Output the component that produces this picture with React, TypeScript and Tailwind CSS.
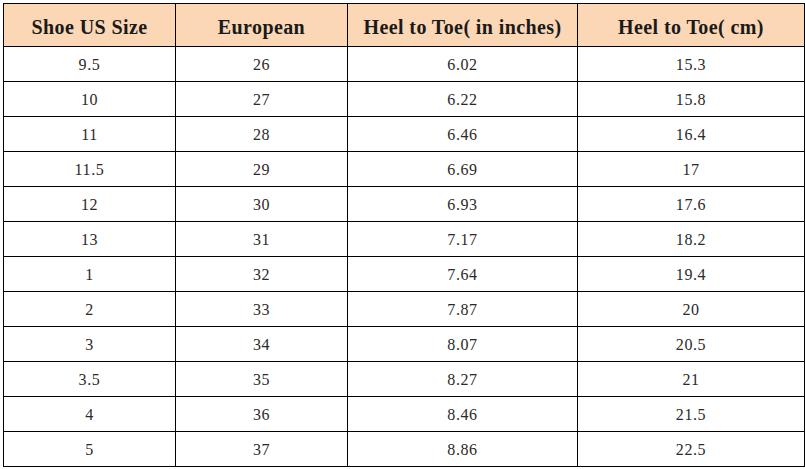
const rows = [
  ["9.5", "26", "6.02", "15.3"],
  ["10", "27", "6.22", "15.8"],
  ["11", "28", "6.46", "16.4"],
  ["11.5", "29", "6.69", "17"],
  ["12", "30", "6.93", "17.6"],
  ["13", "31", "7.17", "18.2"],
  ["1", "32", "7.64", "19.4"],
  ["2", "33", "7.87", "20"],
  ["3", "34", "8.07", "20.5"],
  ["3.5", "35", "8.27", "21"],
  ["4", "36", "8.46", "21.5"],
  ["5", "37", "8.86", "22.5"],
];

const headers = ["Shoe US Size", "European", "Heel to Toe( in inches)", "Heel to Toe( cm)"];
const widths = ["w-[172px]", "w-[172px]", "w-[230px]", "w-[227px]"];

export default function App() {
  return (
    <div className="w-[805px] h-[469px] bg-white pt-[3px] pl-[3px] overflow-hidden font-['Liberation_Serif',serif] text-[#2a2a2a]">
      <table className="border-collapse table-fixed w-[801px]">
        <colgroup>
          {widths.map((w, i) => (
            <col key={i} className={w} />
          ))}
        </colgroup>
        <thead>
          <tr className="h-[43px] bg-[#fcd7b5]">
            {headers.map((h) => (
              <th key={h} className="border border-black text-center font-bold text-[20px] tracking-[0.4px] text-[#1a1a1a] p-0 pt-[3px]">
                {h}
              </th>
            ))}
          </tr>
        </thead>
        <tbody>
          {rows.map((r, i) => (
            <tr key={i} className="h-[35px]">
              {r.map((c, j) => (
                <td key={j} className="border border-black text-center text-[16px] tracking-[0.6px] p-0 pt-[1px] font-normal">
                  {c}
                </td>
              ))}
            </tr>
          ))}
        </tbody>
      </table>
    </div>
  );
}
